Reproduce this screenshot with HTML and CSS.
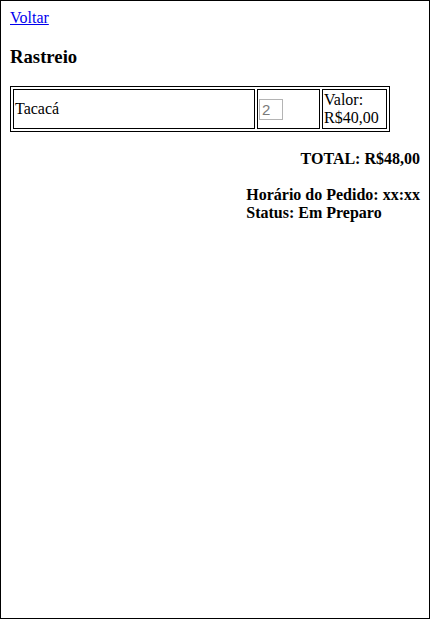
FILE: index.html
```html
<!DOCTYPE html>
<html lang="pt-BR">
<head>
<meta charset="utf-8">
<title>Rastreio</title>
<link rel="stylesheet" href="styles.css">
</head>
<body>
<div class="page">
  <a class="back" href="#">Voltar</a>
  <h3 class="title">Rastreio</h3>
  <table class="items" border="1">
    <tr>
      <td class="c-name">Tacacá</td>
      <td class="c-qty"><input class="qty" type="number" value="2" disabled></td>
      <td class="c-val">Valor: R$40,00</td>
    </tr>
  </table>
  <h4 class="total">TOTAL: R$48,00</h4>
  <div class="info">
    <h4 class="info-text">Horário do Pedido: xx:xx<br>Status: Em Preparo</h4>
  </div>
</div>
</body>
</html>
```

FILE: styles.css
```css
html, body {
  margin: 0;
  padding: 0;
}
body {
  font-family: "Liberation Serif", "Times New Roman", serif;
  font-size: 16px;
  color: #000;
  background: #fff;
}
.page {
  box-sizing: border-box;
  min-height: 100vh;
  border: 1px solid #000;
  padding: 8px 9px;
}
.back {
  display: block;
  width: max-content;
  color: #0000ee;
}
.title {
  font-size: 18.72px;
  margin: 18.72px 0;
}
.items {
  width: 380px;
  border-collapse: separate;
  border-spacing: 2px;
  border: 1px solid #000;
  table-layout: fixed;
}
.items td {
  border: 1px solid #000;
  padding: 1px;
  vertical-align: middle;
}
.c-name { width: 238px; }
.c-qty { width: 59px; }
.c-val { width: auto; }
.qty {
  box-sizing: border-box;
  width: 24px;
  height: 21px;
  margin: 0;
  font-size: 15px;
  line-height: 17px;
  font-family: Arial, "Liberation Sans", sans-serif;
  padding: 1px 2px;
  border: 1px solid #b4b4b4;
  color: #7a7a7a;
  background: #fff;
  -moz-appearance: textfield;
  appearance: textfield;
}
.qty::-webkit-inner-spin-button,
.qty::-webkit-outer-spin-button {
  -webkit-appearance: none;
  margin: 0;
}
.total {
  text-align: right;
  font-size: 16px;
  margin: 18px 0;
}
.info {
  display: flex;
  justify-content: flex-end;
}
.info-text {
  font-size: 16px;
  margin: 0;
}
```
